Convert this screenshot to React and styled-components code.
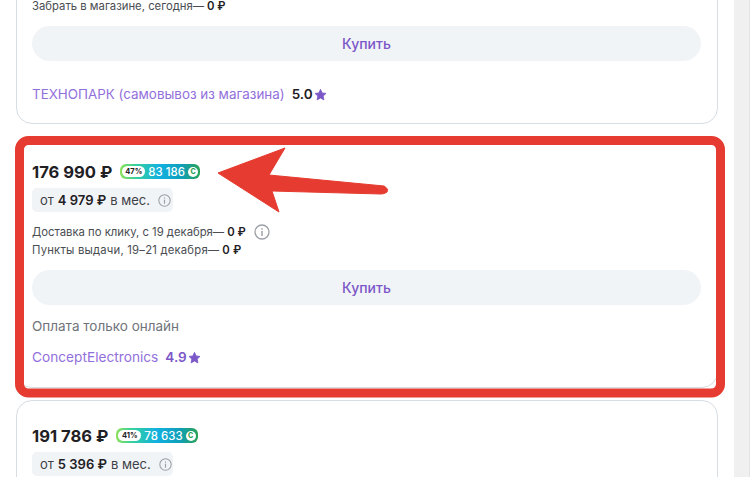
import React from "react";
import styled, { createGlobalStyle } from "styled-components";

const Global = createGlobalStyle`
  html, body { margin: 0; padding: 0; background: #fff; overflow: hidden; }
  body { font-family: Inter, "Noto Sans", sans-serif; color: #1f2024; }
`;

const Page = styled.div`
  position: relative;
  display: flex;
  width: 750px;
  height: 477px;
  overflow: hidden;
`;

const Column = styled.main`
  flex: 1;
  display: flex;
  flex-direction: column;
  gap: 12px;
  padding: 0 16px;
  margin-top: -40px;
`;

const Scrollbar = styled.div`
  width: 16px;
  background: #f0f0f0;
  border-right: 1px solid #e4e4e4;
  box-sizing: border-box;
`;

const Card = styled.section`
  flex: none;
  box-sizing: border-box;
  display: flex;
  flex-direction: column;
  padding: 16px 16px 0 15px;
  height: ${(p) => p.$h}px;
  border: 1px solid #d6dde3;
  border-radius: 16px;
`;

const PriceRow = styled.div`
  display: flex;
  align-items: center;
  height: 24px;
  gap: 8px;
  margin-top: 7px;
`;

const Price = styled.span`
  font-size: 16.6px;
  font-weight: 700;
  line-height: 24px;
  white-space: nowrap;
`;

const Bonus = styled.span`
  display: inline-flex;
  align-items: center;
  height: 15px;
  padding: 0 2px;
  gap: 3px;
  border-radius: 6px;
  background: linear-gradient(90deg, #8ee25a 0%, #35d0a0 20%, #12b0e0 50%, #0f9fb8 78%, #2aa254 100%);
  color: #fff;
  font-size: 11.5px;
  font-weight: 500;
  margin-top: -1px;
`;

const Percent = styled.span`
  display: inline-flex;
  align-items: center;
  justify-content: center;
  width: 23px;
  height: 11px;
  border-radius: 6px;
  background: #fff;
  color: #222;
  font-size: 7.5px;
  font-weight: 700;
`;

const Coin = styled.span`
  display: inline-flex;
  align-items: center;
  justify-content: center;
  width: 10px;
  height: 10px;
  border-radius: 50%;
  background: #fff;
  color: #2aa254;
  font-size: 7px;
  font-weight: 800;
`;

const Installment = styled.div`
  display: inline-flex;
  align-self: flex-start;
  align-items: center;
  box-sizing: border-box;
  width: 141px;
  height: 24px;
  padding: 0 8px;
  margin-top: 4px;
  border-radius: 5px;
  background: #f1f4f7;
  color: #3d4045;
  font-size: 13px;
  white-space: nowrap;

  b { font-weight: 600; color: #1f2024; margin: 0 4px; }
  svg { margin-left: 8px; flex: none; }
`;

const Delivery = styled.div`
  display: flex;
  flex-direction: column;
  margin-top: ${(p) => p.$top}px;
  font-size: 11.3px;
  line-height: 18px;
  color: #4a4d52;
`;

const DeliveryLine = styled.div`
  display: flex;
  align-items: center;
  white-space: nowrap;
  letter-spacing: ${(p) => p.$spacing || 0}px;

  b { font-weight: 600; color: #1f2024; margin-left: 3px; }
  svg { margin-left: 8px; }
`;

const Buy = styled.button`
  flex: none;
  height: 35px;
  margin-top: ${(p) => p.$top}px;
  border: 0;
  border-radius: 18px;
  background: #f1f4f7;
  color: #7b57c8;
  font-family: inherit;
  font-size: 14px;
  font-weight: 500;
`;

const Note = styled.div`
  margin-top: 12px;
  font-size: 13.5px;
  line-height: 18px;
  color: #70747a;
`;

const Seller = styled.div`
  display: flex;
  align-items: center;
  gap: 7px;
  margin-top: ${(p) => p.$top}px;
  height: 20px;
  font-size: ${(p) => p.$size}px;
  color: #9270dc;
  white-space: nowrap;
`;

const Rating = styled.span`
  display: inline-flex;
  align-items: center;
  gap: 1px;
  font-size: 13.5px;
  font-weight: 600;
  color: ${(p) => p.$c};
`;

const Overlay = styled.svg`
  position: absolute;
  inset: 0;
  pointer-events: none;
`;

const Info = ({ s = 13, c = "#9ba0a6" }) => (
  <svg width={s} height={s} viewBox="0 0 16 16" fill="none">
    <circle cx="8" cy="8" r="7" stroke={c} strokeWidth="1.3" />
    <rect x="7.3" y="7" width="1.4" height="5" fill={c} />
    <rect x="7.3" y="4.2" width="1.4" height="1.5" fill={c} />
  </svg>
);

const Star = () => (
  <svg width="13" height="13" viewBox="0 0 24 24" fill="#7b57c8" stroke="#7b57c8" strokeWidth="1.5" strokeLinejoin="round">
    <path d="M12 2.5l3 6.6 7.2.9-5.3 4.9 1.4 7.1L12 18.4l-6.3 3.6 1.4-7.1L1.8 10l7.2-.9z" />
  </svg>
);

const BonusBadge = ({ pct, val }) => (
  <Bonus>
    <Percent>{pct}</Percent>
    {val}
    <Coin>C</Coin>
  </Bonus>
);

export default function App() {
  return (
    <Page>
      <Global />
      <Column>
        <Card $h={164}>
          <Delivery $top={2}>
            <DeliveryLine>&nbsp;</DeliveryLine>
            <DeliveryLine>Забрать в магазине, сегодня— <b>0 ₽</b></DeliveryLine>
          </Delivery>
          <Buy $top={11}>Купить</Buy>
          <Seller $top={23} $size={13.4}>
            ТЕХНОПАРК (самовывоз из магазина)
            <Rating $c="#1f2024">5.0<Star /></Rating>
          </Seller>
        </Card>
        <Card $h={252}>
          <PriceRow>
            <Price>176 990 ₽</Price>
            <BonusBadge pct="47%" val="83 186" />
          </PriceRow>
          <Installment>от <b>4 979 ₽</b> в мес.<Info /></Installment>
          <Delivery $top={11}>
            <DeliveryLine>Доставка по клику, с 19 декабря— <b>0 ₽</b><Info s={16} /></DeliveryLine>
            <DeliveryLine $spacing={0.2}>Пункты выдачи, 19–21 декабря— <b>0 ₽</b></DeliveryLine>
          </Delivery>
          <Buy $top={11}>Купить</Buy>
          <Note>Оплата только онлайн</Note>
          <Seller $top={12} $size={13.7}>
            ConceptElectronics
            <Rating $c="#7b57c8">4.9<Star /></Rating>
          </Seller>
        </Card>
        <Card $h={160}>
          <PriceRow>
            <Price>191 786 ₽</Price>
            <BonusBadge pct="41%" val="78 633" />
          </PriceRow>
          <Installment>от <b>5 396 ₽</b> в мес.<Info /></Installment>
        </Card>
      </Column>
      <Scrollbar />
      <Overlay width="750" height="477" viewBox="0 0 750 477">
        <rect x="19.5" y="140.5" width="701" height="252.5" rx="9" fill="none" stroke="#e63b30" strokeWidth="9" />
        <path d="M218 173 L285 148 L269 175 L384 186 Q389 189 387 192 Q385 194 381 194 L272 191 L279 212 Z" fill="#e63b30" stroke="#e63b30" strokeLinejoin="round" />
      </Overlay>
    </Page>
  );
}
